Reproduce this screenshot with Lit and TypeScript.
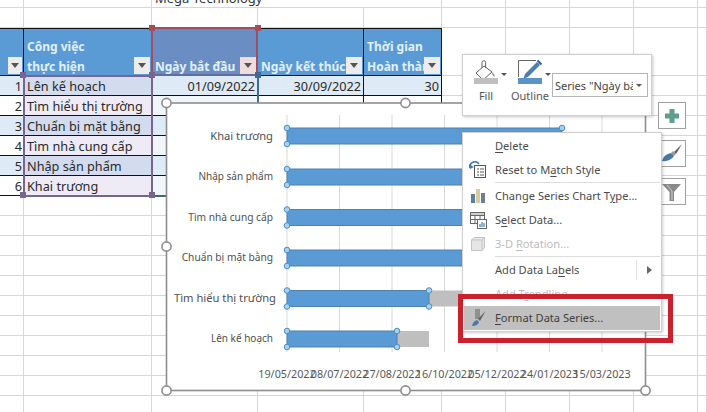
import { LitElement, html, css, svg } from "lit";
import { customElement } from "lit/decorators.js";

const COLS = [24, 128, 106, 106, 78, 64, 64, 64, 64, 9];
const ROWS = [8, 20, 48, 20, 20, 20, 20, 20, 20, 20, 20, 20, 20, 20, 20, 20, 20, 20, 20, 17];

const TASKS = ["Lên kế hoạch", "Tìm hiểu thị trường", "Chuẩn bị mặt bằng", "Tìm nhà cung cấp", "Nhập sản phẩm", "Khai trương"];

const BARS = [
  { label: "Khai trương", y: 128, end: 562, size: 11.2, cy: 140 },
  { label: "Nhập sản phẩm", y: 169, end: 600, size: 10, cy: 180 },
  { label: "Tìm nhà cung cấp", y: 209.5, end: 600, size: 10.2, cy: 221 },
  { label: "Chuẩn bị mặt bằng", y: 250, end: 600, size: 10.2, cy: 261 },
  { label: "Tìm hiểu thị trường", y: 290.5, end: 429, gray: 470, size: 11.2, cy: 302 },
  { label: "Lên kế hoạch", y: 331, end: 397, gray: 429, size: 10, cy: 342 },
];
const TICKS = [
  [287, "19/05/2022"], [339.5, "08/07/2022"], [392, "27/08/2022"], [444.5, "16/10/2022"],
  [497, "05/12/2022"], [549.5, "24/01/2023"], [602, "15/03/2023"],
] as [number, string][];

const chartSvg = () => html`<svg class="chart-svg" viewBox="160 97 492 300" width="492" height="300">
  <rect x="166.5" y="103" width="479" height="287.5" fill="#fff" stroke="#8e8e8e" stroke-width="1.6"></rect>
  ${TICKS.map(([x]) => svg`<line x1=${x} x2=${x} y1="115" y2="352" stroke="#d9d9d9"></line>`)}
  ${BARS.map((b) => svg`
    ${b.gray ? svg`<rect x=${b.end} y=${b.y} width=${b.gray - b.end} height="16" fill="#bfbfbf"></rect>` : ""}
    <rect x="287" y=${b.y} width=${b.end - 287} height="16" fill="#5b9bd5" stroke="#4f81ad" stroke-width="1"></rect>
    <text x=${b.label.startsWith("Tìm hiểu") ? 276 : 273} y=${b.cy} text-anchor="end" font-size=${b.size} fill="#505050">${b.label}</text>
    ${[287, b.end].flatMap((x) => [b.y, b.y + 16].map((y) => svg`<circle cx=${x} cy=${y} r="2.8" fill="#a9d0ee" stroke="#4a8fc4" stroke-width="1"></circle>`))}
  `)}
  ${TICKS.map(([x, t]) => svg`<text x=${x} y="378" text-anchor="middle" font-size="10.8" fill="#595959">${t}</text>`)}
  ${[[166.5, 103], [405.5, 103], [166.5, 246.5], [166.5, 390.5], [405.5, 390.5], [645.5, 390.5]].map(([x, y]) => svg`<circle cx=${x} cy=${y} r="4.6" fill="#fff" stroke="#8e8e8e" stroke-width="1.6"></circle>`)}
</svg>`;

const ICON = {
  fill: html`<svg width="28" height="26" viewBox="0 0 28 26"><path d="M12 7 L4 14 L11 21 L20 13 Z" fill="#fff" stroke="#666" stroke-width="1"></path><path d="M10 9 V3.5 a1.8 1.8 0 0 1 3.6 0 V9" fill="none" stroke="#666"></path><path d="M20 13 q3 2 3 5 q-3 -1 -3 -5 Z" fill="#8a8a8a"></path><rect x="2" y="19" width="24" height="6" fill="#bfbfbf"></rect></svg>`,
  outline: html`<svg width="28" height="26" viewBox="0 0 28 26"><path d="M2.5 18 V1.5 H20" fill="none" stroke="#666"></path><path d="M9 15 L21 3 L24 6 L12 18 L7.5 19.5 Z" fill="#4a7fb0"></path><path d="M21.5 1.5 L25.5 5.5" stroke="#2f5f8c" stroke-width="2"></path><rect x="2" y="19" width="24" height="6" fill="#5a93c6"></rect></svg>`,
  reset: html`<svg width="18" height="18" viewBox="0 0 18 18"><rect x="5.5" y="4.5" width="11" height="12" fill="#fff" stroke="#555"></rect><path d="M8 8h2M11 8h4M8 11h2M11 11h4M8 14h2M11 14h4" stroke="#555"></path><path d="M1 7 A5 5 0 0 1 10 3" fill="none" stroke="#3f7fb5" stroke-width="1.6"></path><path d="M0 3 L1 8 L5 6 Z" fill="#3f7fb5"></path></svg>`,
  change: html`<svg width="18" height="18" viewBox="0 0 18 18"><rect x="2" y="7" width="4" height="9" fill="#5b7f9f"></rect><rect x="7" y="2" width="4" height="14" fill="#d8c9a0"></rect><rect x="12" y="6" width="4" height="10" fill="#6f7f8f"></rect></svg>`,
  select: html`<svg width="18" height="20" viewBox="0 0 18 20"><rect x="1.5" y="2.5" width="14" height="11" fill="#fff" stroke="#666"></rect><rect x="1.5" y="2.5" width="14" height="3" fill="#cfcfcf" stroke="#666"></rect><path d="M6 5v9M11 5v9M1.500 9.500h14" stroke="#666"></path><rect x="8.500" y="9.500" width="9" height="9" fill="#fff" stroke="#666"></rect><path d="M11 17v-3M13 17v-5M15 17v-4" stroke="#3f7fb5" stroke-width="1.2"></path></svg>`,
  d3: html`<svg width="18" height="18" viewBox="0 0 18 18"><path d="M2.5 5 L5 2.5 H15.5 V13 L13 15.5 H2.5 Z" fill="#e6e6e6" stroke="#c4c4c4"></path><path d="M2.5 5 H13 V15.5 M13 5 L15.5 2.5" fill="none" stroke="#c4c4c4"></path></svg>`,
  format: html`<svg width="18" height="20" viewBox="0 0 18 20"><path d="M6 1 h5 v10 h-5 Z" fill="#8f8f8f"></path><path d="M16.500 3 L9 11 L11 13 Z" fill="#5f6468"></path><path d="M8 12 q-4 1 -5 6 q6 0 7 -4 Z" fill="#4a78ac"></path></svg>`,
  plus: html`<svg width="16" height="16" viewBox="0 0 16 16"><path d="M5.500 1h5v4.500H15v5h-4.500V15h-5v-4.500H1v-5h4.500Z" fill="#5f9e8c"></path></svg>`,
  brush: html`<svg width="24" height="22" viewBox="0 0 24 22"><path d="M22 1 L14 9 L16 11 Z" fill="#5a5f63"></path><path d="M13 8 L11 10 L14 13 L16 11 Z" fill="#9a9a9a"></path><path d="M11 10 q-7 1 -9 8 q8 1 12 -5 Z" fill="#4a78a6"></path></svg>`,
  funnel: html`<svg width="22" height="20" viewBox="0 0 22 20"><path d="M1 2 H20 L13 10 V19 H8.500 V10 Z" fill="#8a8a8a"></path><path d="M6 3 L11 9 V18" fill="none" stroke="#d0d0d0"></path></svg>`,
};

@customElement("app-root")
export class AppRoot extends LitElement {
  static styles = css`
    :host { display: block; width: 707px; height: 412px; position: relative; overflow: hidden; background: #fff;
      font-family: "Noto Sans", "Open Sans", sans-serif; color: #333; }
    .sheet { display: grid; width: 707px; height: 412px; }
    .c { box-sizing: border-box; border-right: 1px solid #d6d6d6; border-bottom: 1px solid #d6d6d6; min-width: 0; }
    .title { overflow: visible; display: flex; align-items: flex-end; border-right: 0; white-space: nowrap;
      font-size: 13px; line-height: 18px; padding-left: 3px; color: #333; }
    .title span { margin-bottom: 0; }

    .t { font-size: 12.7px; line-height: 20px; padding: 0 2px 0 3px; white-space: nowrap; overflow: hidden; border-right-color: #111; border-bottom-color: #111; color: #2a2a2a; }
    .t.low { padding-top: 2px; }
    .num { text-align: right; padding: 0 1px 0 0; }
    .r { text-align: right; }
    .blue { background: #deeaf6; }
    .white { background: #fff; }
    .task { background: #eeeaf6; }
    .task.odd { background: #d3dcee; }
    .pale { background: #f1f6fb; }

    .h { background: #5b9bd5; color: #e2f0fb; font-weight: 700; font-size: 12px; line-height: 20px; padding: 8px 1px 0 3px;
      position: relative; overflow: hidden; white-space: pre; border-right-color: #111; border-bottom-color: #111; border-top: 1px solid #111; }
    .h.nosep { border-right-color: #5b9bd5; }
    .h.sel { background: #6a8ec4; }
    .fb { position: absolute; right: 1px; bottom: 1px; width: 16px; height: 17px; background: #ececec; display: flex; align-items: center; justify-content: center; }
    .fb::after { content: ""; border: 4px solid transparent; border-top: 5px solid #555; border-bottom: 0; }
    .fb.pink { background: #efdcdc; }
    .h.rn .fb { right: 1px; width: 14px; }

    .selbox { position: absolute; box-sizing: border-box; border: 2px solid #77648f; }
    .task-sel { left: 23px; top: 75px; width: 130px; height: 122px; }
    .start-sel { left: 151px; top: 27px; width: 107px; height: 49px; border-color: #a14f5f; border-bottom-color: #5f6d9f; }
    .blue-line { position: absolute; left: 257px; top: 76px; width: 2px; height: 28px; background: #3f6b97; }
    .blue-foot { position: absolute; left: 155px; top: 195px; width: 12px; height: 2px; background: #3f6b77; }
    .sq { position: absolute; width: 6px; height: 6px; background: #77648f; }
    .sq.red { background: #a14f5f; }
    .sq.navy { background: #3f6b97; }
    .sq.a { left: 20px; top: 72px; } .sq.b { left: 149px; top: 72px; } .sq.c1 { left: 20px; top: 192px; } .sq.d { left: 149px; top: 192px; }
    .sq.e { left: 149px; top: 25px; } .sq.f { left: 255px; top: 25px; } .sq.g { left: 255px; top: 72px; }

    .chart { position: absolute; left: 160px; top: 97px; width: 492px; height: 300px; }
    .chart-svg { display: block; font-family: "Noto Sans", sans-serif; }

    .side { position: absolute; left: 658px; top: 102px; display: flex; flex-direction: column; gap: 11px; }
    .side div { box-sizing: border-box; width: 28px; height: 27px; border: 1px solid #a0a0a0; background: #fff; display: flex; align-items: center; justify-content: center; }

    .toolbar { position: absolute; left: 462px; top: 54px; width: 190px; height: 62px; box-sizing: border-box; background: #fff; border: 1px solid #cfcfcf;
      box-shadow: 1px 1px 3px rgba(0,0,0,.22); display: flex; padding: 4px 0 0 9px; font-size: 11px; color: #555; }
    .tool { width: 44px; display: flex; flex-direction: column; align-items: flex-start; position: relative; }
    .tool svg { display: block; }
    .tool span { margin-top: 3px; width: 28px; white-space: nowrap; display: flex; justify-content: center; line-height: 16px; }
    .tool::after { content: ""; position: absolute; left: 29px; top: 14px; border: 3px solid transparent; border-top: 3px solid #555; border-bottom: 0; }
    .tool.o { width: 36px; }
    .series { box-sizing: border-box; width: 96px; height: 24px; margin-top: 14px; border: 1px solid #b5b5b5; display: flex; align-items: center; padding-left: 2px; font-size: 11px; color: #444; white-space: nowrap; position: relative; }
    .series b { font-weight: 400; overflow: hidden; width: 78px; display: block; }
    .series::after { content: ""; position: absolute; right: 5px; top: 10px; border: 3px solid transparent; border-top: 3px solid #555; border-bottom: 0; }

    .menu { position: absolute; left: 462px; top: 132px; width: 200px; box-sizing: border-box; background: #fff; border: 1px solid #d0d0d0; box-shadow: 1px 1px 3px rgba(0,0,0,.2);
      padding: 1px; font-size: 11.1px; color: #4c4c4c; }
    .it { height: 24px; display: flex; align-items: center; position: relative; }
    .it .ic { width: 31px; display: flex; justify-content: center; padding-right: 4px; box-sizing: border-box; }
    .it .lb { padding-bottom: 2px; }
    .it u { text-underline-offset: 2px; }
    .it.off { color: #bcbcbc; }
    .it.hl { background: #c0c0c0; color: #3f3f3f; }
    .sp { height: 2px; margin-left: 31px; box-sizing: border-box; border-top: 1px solid #dcdcdc; }
    .sub { position: absolute; right: 8px; top: 8px; border: 4px solid transparent; border-left: 5px solid #666; border-right: 0; }
    .subsep { position: absolute; right: 23px; top: 2px; bottom: 2px; width: 1px; background: #e0e0e0; }

    .red-box { position: absolute; left: 458px; top: 294px; width: 215px; height: 49px; box-sizing: border-box; border: 5.5px solid #c9222e; }
  `;

  private gridCells() {
    const cells: unknown[] = [];
    for (let r = 0; r < ROWS.length; r++) {
      for (let c = 0; c < COLS.length; c++) {
        const pos = `grid-row:${r + 1};grid-column:${c + 1}`;
        if (r === 0 && c === 2) {
          cells.push(html`<div class="c title" style=${pos + " / span 2"}><span>Mega Technology</span></div>`);
          continue;
        }
        if (r === 0 && c === 3) continue;
        if (r >= 2 && r <= 8 && c <= 4) continue;
        cells.push(html`<div class="c" style=${pos}></div>`);
      }
    }
    return cells;
  }

  private tableCells() {
    const head = html`
      <div class="c h rn" style="grid-row:3;grid-column:1"><i class="fb"></i></div>
      <div class="c h" style="grid-row:3;grid-column:2">Công việc
thực hiện<i class="fb"></i></div>
      <div class="c h sel nosep" style="grid-row:3;grid-column:3">
Ngày bắt đầu<i class="fb pink"></i></div>
      <div class="c h" style="grid-row:3;grid-column:4">
Ngày kết thúc<i class="fb"></i></div>
      <div class="c h" style="grid-row:3;grid-column:5">Thời gian
Hoàn thành<i class="fb"></i></div>`;
    const rows = TASKS.map((t, i) => {
      const row = i + 4;
      const odd = i % 2 === 0;
      const bg = odd ? "blue" : "white";
      const first = i === 0;
      const second = i === 1;
      return html`
        <div class="c t num ${bg}" style="grid-row:${row};grid-column:1">${i + 1}</div>
        <div class="c t task ${odd ? "odd" : ""}" style="grid-row:${row};grid-column:2">${t}</div>
        <div class="c t r ${odd ? "blue" : "pale"} ${second ? "low" : ""}" style="grid-row:${row};grid-column:3">${first ? "01/09/2022" : second ? "01/10/2022" : ""}</div>
        <div class="c t r ${bg} ${second ? "low" : ""}" style="grid-row:${row};grid-column:4">${first ? "30/09/2022" : second ? "31/10/2022" : ""}</div>
        <div class="c t r ${bg}" style="grid-row:${row};grid-column:5">${first ? "30" : ""}</div>`;
    });
    return [head, rows];
  }

  render() {
    return html`
      <div class="sheet" style="grid-template-columns:${COLS.map((c) => c + "px").join(" ")};grid-template-rows:${ROWS.map((r) => r + "px").join(" ")}">
        ${this.gridCells()}
        ${this.tableCells()}
      </div>

      <div class="selbox task-sel"></div>
      <div class="selbox start-sel"></div>
      <div class="blue-line"></div>
      <div class="blue-foot"></div>
      <i class="sq a"></i><i class="sq b"></i><i class="sq c1"></i><i class="sq d"></i>
      <i class="sq red e"></i><i class="sq red f"></i><i class="sq navy g"></i>

      <div class="chart">${chartSvg()}</div>

      <div class="side">
        <div>${ICON.plus}</div>
        <div>${ICON.brush}</div>
        <div>${ICON.funnel}</div>
      </div>

      <div class="toolbar">
        <div class="tool">${ICON.fill}<span>Fill</span></div>
        <div class="tool o">${ICON.outline}<span>Outline</span></div>
        <div class="series"><b>Series "Ngày bắt đầu"</b></div>
      </div>

      <div class="menu">
        <div class="it"><span class="ic"></span><span class="lb"><u>D</u>elete</span></div>
        <div class="it"><span class="ic">${ICON.reset}</span><span class="lb">Reset to M<u>a</u>tch Style</span></div>
        <div class="sp"></div>
        <div class="it"><span class="ic">${ICON.change}</span><span class="lb">Change Series Chart T<u>y</u>pe...</span></div>
        <div class="it"><span class="ic">${ICON.select}</span><span class="lb">S<u>e</u>lect Data...</span></div>
        <div class="it off"><span class="ic">${ICON.d3}</span><span class="lb">3-D <u>R</u>otation...</span></div>
        <div class="sp"></div>
        <div class="it"><span class="ic"></span><span class="lb">Add Data La<u>b</u>els</span><i class="subsep"></i><i class="sub"></i></div>
        <div class="it off"><span class="ic"></span><span class="lb">Add T<u>r</u>endline...</span></div>
        <div class="it hl"><span class="ic">${ICON.format}</span><span class="lb"><u>F</u>ormat Data Series...</span></div>
      </div>

      <div class="red-box"></div>
    `;
  }
}
